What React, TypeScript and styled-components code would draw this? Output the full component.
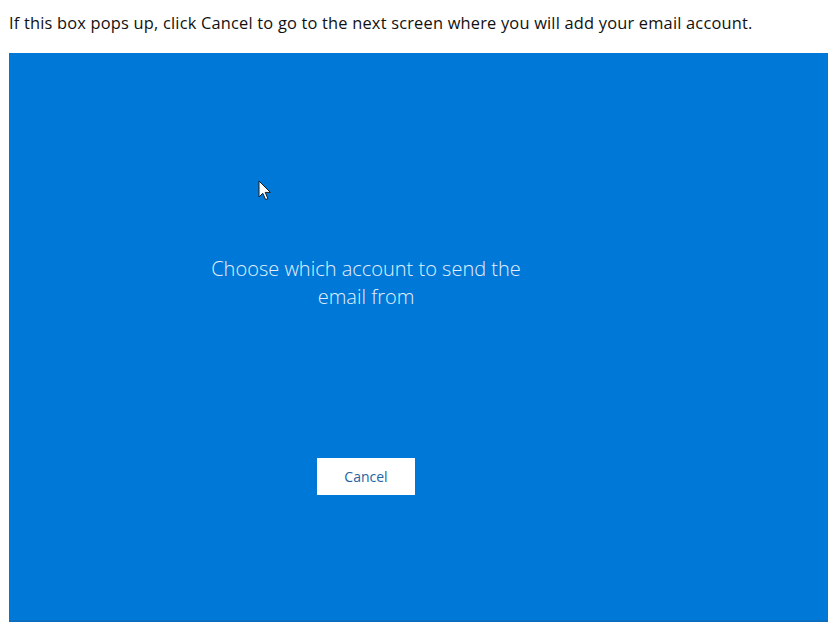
import React from "react";
import { styled, createGlobalStyle } from "styled-components";

const GlobalStyle = createGlobalStyle`
  html, body {
    margin: 0;
    padding: 0;
    background: #ffffff;
  }
`;

const App = () => {
  return (
    <>
      <GlobalStyle />
      <StyledPage>
        <Instruction>
          If this box pops up, click Cancel to go to the next screen where you
          will add your email account.
        </Instruction>
        <BluePanel>
          <Cursor viewBox="0 0 13 21" width="13" height="21">
            <path
              d="M1 1 L1 17 L4.8 13.3 L7.6 19.6 L9.9 18.6 L7.2 12.4 L12.4 12.4 Z"
              fill="#ffffff"
              stroke="#1a1a1a"
              strokeWidth="1"
              strokeLinejoin="round"
            />
          </Cursor>
          <DialogColumn>
            <Prompt>Choose which account to send the email from</Prompt>
            <CancelButton>Cancel</CancelButton>
          </DialogColumn>
        </BluePanel>
      </StyledPage>
    </>
  );
};

export default App;

const StyledPage = styled.div`
  width: 839px;
  height: 628px;
  padding: 11px 11px 6px 9px;
  box-sizing: border-box;
  display: flex;
  flex-direction: column;
`;
const Instruction = styled.p`
  margin: 0;
  height: 42px;
  font-family: "Open Sans", "Liberation Sans", sans-serif;
  font-size: 16.4px;
  letter-spacing: 0.2px;
  line-height: 24px;
  color: #111111;
  white-space: nowrap;
`;
const BluePanel = styled.div`
  position: relative;
  flex: 1;
  background: #0078d7;
  border-bottom: 2px solid #0a6fc0;
  padding: 202px 0 0 197px;
`;
const Cursor = styled.svg`
  position: absolute;
  left: 249px;
  top: 127px;
`;
const DialogColumn = styled.div`
  width: 320px;
  display: flex;
  flex-direction: column;
  align-items: center;
  gap: 147px;
`;
const Prompt = styled.div`
  font-family: "Open Sans", "Noto Sans", sans-serif;
  font-weight: 300;
  font-size: 20px;
  line-height: 28px;
  color: #e2f0fd;
  text-align: center;
`;
const CancelButton = styled.button`
  width: 98px;
  height: 37px;
  border: none;
  background: #ffffff;
  font-family: "Open Sans", "Noto Sans", sans-serif;
  font-size: 14px;
  color: #2463a0;
  padding: 0;
  cursor: pointer;
`;
